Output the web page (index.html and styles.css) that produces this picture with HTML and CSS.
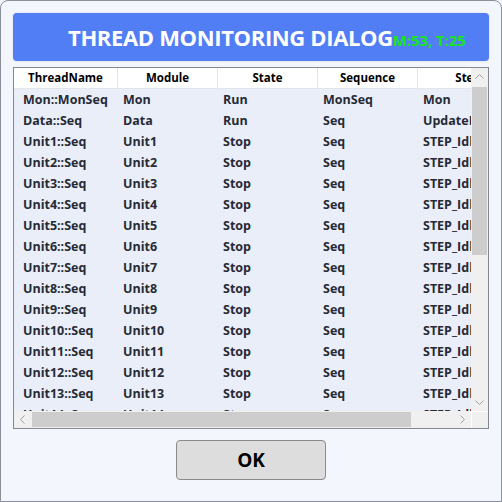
FILE: index.html
```html
<!DOCTYPE html>
<html>
<head>
<meta charset="utf-8">
<link rel="stylesheet" href="styles.css">
</head>
<body>
<div class="window">
  <div class="header">
    <span class="title">THREAD MONITORING DIALOG</span><span class="counts">M:53, T:25</span>
  </div>
  <div class="grid">
    <div class="content">
      <div class="row head">
        <div class="c c1">ThreadName</div><div class="c c2">Module</div><div class="c c3">State</div><div class="c c4">Sequence</div><div class="c c5">Step</div>
      </div>
      <div class="row"><div class="c c1">Mon::MonSeq</div><div class="c c2">Mon</div><div class="c c3">Run</div><div class="c c4">MonSeq</div><div class="c c5">Mon</div></div>
      <div class="row"><div class="c c1">Data::Seq</div><div class="c c2">Data</div><div class="c c3">Run</div><div class="c c4">Seq</div><div class="c c5">UpdateData</div></div>
      <div class="row"><div class="c c1">Unit1::Seq</div><div class="c c2">Unit1</div><div class="c c3">Stop</div><div class="c c4">Seq</div><div class="c c5">STEP_Idle</div></div>
      <div class="row"><div class="c c1">Unit2::Seq</div><div class="c c2">Unit2</div><div class="c c3">Stop</div><div class="c c4">Seq</div><div class="c c5">STEP_Idle</div></div>
      <div class="row"><div class="c c1">Unit3::Seq</div><div class="c c2">Unit3</div><div class="c c3">Stop</div><div class="c c4">Seq</div><div class="c c5">STEP_Idle</div></div>
      <div class="row"><div class="c c1">Unit4::Seq</div><div class="c c2">Unit4</div><div class="c c3">Stop</div><div class="c c4">Seq</div><div class="c c5">STEP_Idle</div></div>
      <div class="row"><div class="c c1">Unit5::Seq</div><div class="c c2">Unit5</div><div class="c c3">Stop</div><div class="c c4">Seq</div><div class="c c5">STEP_Idle</div></div>
      <div class="row"><div class="c c1">Unit6::Seq</div><div class="c c2">Unit6</div><div class="c c3">Stop</div><div class="c c4">Seq</div><div class="c c5">STEP_Idle</div></div>
      <div class="row"><div class="c c1">Unit7::Seq</div><div class="c c2">Unit7</div><div class="c c3">Stop</div><div class="c c4">Seq</div><div class="c c5">STEP_Idle</div></div>
      <div class="row"><div class="c c1">Unit8::Seq</div><div class="c c2">Unit8</div><div class="c c3">Stop</div><div class="c c4">Seq</div><div class="c c5">STEP_Idle</div></div>
      <div class="row"><div class="c c1">Unit9::Seq</div><div class="c c2">Unit9</div><div class="c c3">Stop</div><div class="c c4">Seq</div><div class="c c5">STEP_Idle</div></div>
      <div class="row"><div class="c c1">Unit10::Seq</div><div class="c c2">Unit10</div><div class="c c3">Stop</div><div class="c c4">Seq</div><div class="c c5">STEP_Idle</div></div>
      <div class="row"><div class="c c1">Unit11::Seq</div><div class="c c2">Unit11</div><div class="c c3">Stop</div><div class="c c4">Seq</div><div class="c c5">STEP_Idle</div></div>
      <div class="row"><div class="c c1">Unit12::Seq</div><div class="c c2">Unit12</div><div class="c c3">Stop</div><div class="c c4">Seq</div><div class="c c5">STEP_Idle</div></div>
      <div class="row"><div class="c c1">Unit13::Seq</div><div class="c c2">Unit13</div><div class="c c3">Stop</div><div class="c c4">Seq</div><div class="c c5">STEP_Idle</div></div>
      <div class="row"><div class="c c1">Unit14::Seq</div><div class="c c2">Unit14</div><div class="c c3">Stop</div><div class="c c4">Seq</div><div class="c c5">STEP_Idle</div></div>
    </div>
    <div class="vscroll">
      <svg class="arrow" width="17" height="17" viewBox="0 0 17 17"><path d="M4.5 10.5 L8.5 6.5 L12.5 10.5" fill="none" stroke="#a0a0a0" stroke-width="1"/></svg>
      <div class="vtrack"><div class="vthumb"></div></div>
      <svg class="arrow" width="17" height="17" viewBox="0 0 17 17"><path d="M4.5 6.5 L8.5 10.5 L12.5 6.5" fill="none" stroke="#a0a0a0" stroke-width="1"/></svg>
    </div>
    <div class="hscroll">
      <svg class="arrow" width="17" height="17" viewBox="0 0 17 17"><path d="M10.5 4.5 L6.5 8.5 L10.5 12.5" fill="none" stroke="#a0a0a0" stroke-width="1"/></svg>
      <div class="htrack"><div class="hthumb"></div></div>
      <svg class="arrow" width="17" height="17" viewBox="0 0 17 17"><path d="M6.5 4.5 L10.5 8.5 L6.5 12.5" fill="none" stroke="#a0a0a0" stroke-width="1"/></svg>
    </div>
    <div class="corner"></div>
  </div>
  <div class="footer">
    <button class="ok">OK</button>
  </div>
</div>
</body>
</html>
```
FILE: styles.css
```css
html, body {
  margin: 0;
  padding: 0;
  background: #f3f6fc;
}
.window {
  width: 502px;
  height: 502px;
  box-sizing: border-box;
  border: 1px solid #8a8f99;
  border-radius: 8px 8px 0 0;
  background: #f3f6fc;
  padding: 12px 12px 0 12px;
  display: flex;
  flex-direction: column;
  font-family: "Open Sans", "Noto Sans", sans-serif;
}
.header {
  height: 48px;
  background: #517ef4;
  border-radius: 4px;
  display: flex;
  align-items: center;
  padding-left: 55px;
  box-shadow: 0 0 2px rgba(0,0,0,0.15);
}
.title {
  color: #ffffff;
  font-weight: 700;
  font-size: 22px;
  letter-spacing: -0.35px;
}
.counts {
  color: #17e617;
  font-weight: 700;
  font-size: 15px;
  margin-top: 6px;
  letter-spacing: -0.1px;
}
.grid {
  margin-top: 6px;
  height: 362px;
  box-sizing: border-box;
  border: 1px solid #828790;
  display: grid;
  grid-template-columns: 457px 17px;
  grid-template-rows: 343px 17px;
  background: #ffffff;
}
.content {
  overflow: hidden;
  background: #e9eef8;
}
.row {
  display: flex;
  height: 21px;
  align-items: center;
  font-size: 12.5px;
  font-weight: 700;
  color: #262a35;
  white-space: nowrap;
}
.row.head {
  height: 21px;
  box-sizing: border-box;
  background: #ffffff;
  color: #000000;
  border-bottom: 1px solid #e2e5ea;
  font-size: 11.5px;
}
.c {
  flex: none;
  width: 100px;
  box-sizing: border-box;
  padding-left: 5px;
  overflow: hidden;
}
.c1 { width: 104px; padding-left: 9px; }
.head .c {
  padding-left: 0;
  text-align: center;
  border-right: 1px solid #e5e5e5;
  height: 20px;
  line-height: 20px;
}
.head .c5 {
  border-right: none;
}
.vscroll {
  display: flex;
  flex-direction: column;
  background: #f0f0f0;
}
.vtrack {
  flex: 1;
  padding: 2px 1px 0 1px;
}
.vthumb {
  height: 168px;
  background: #cdcdcd;
}
.hscroll {
  display: flex;
  background: #f0f0f0;
}
.htrack {
  flex: 1;
  padding: 0 0 0 1px;
  display: flex;
  align-items: stretch;
}
.hthumb {
  width: 379px;
  background: #cdcdcd;
  margin: 1px 0;
}
.arrow {
  flex: none;
  display: block;
}
.corner {
  background: #f0f0f0;
  border-left: 1px solid #ffffff;
  border-top: 1px solid #ffffff;
}
.footer {
  display: flex;
  justify-content: center;
  padding-top: 11px;
}
.ok {
  width: 150px;
  height: 40px;
  background: #dddddd;
  border: 1px solid #8a8a8a;
  border-radius: 4px;
  font-family: "Open Sans", "Noto Sans", sans-serif;
  font-weight: 700;
  font-size: 19px;
  color: #000000;
  padding: 0;
}
```
